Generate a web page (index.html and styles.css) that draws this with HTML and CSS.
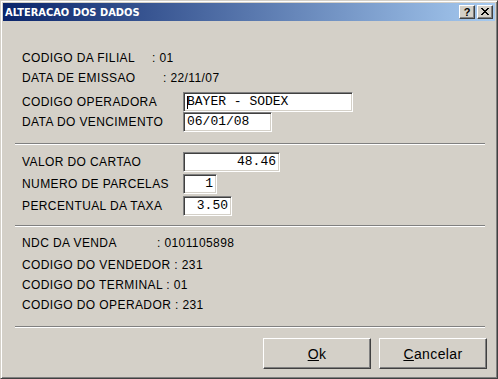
FILE: index.html
```html
<!DOCTYPE html>
<html lang="pt">

<head>
    <meta charset="UTF-8">
    <title>ALTERACAO DOS DADOS</title>
    <link rel="stylesheet" href="styles.css">
</head>

<body>

    <div class="window">
        <div class="titlebar">
            <span class="title">ALTERACAO DOS DADOS</span>
            <div class="ctrls">
                <span class="ctrl">?</span>
                <span class="ctrl close">
                    <svg width="8" height="7" viewBox="0 0 8 7">
                        <path d="M0 0h2v1h1v1h2v-1h1v-1h2v1h-1v1h-1v1h-1v1h1v1h1v1h1v1h-2v-1h-1v-1h-2v1h-1v1h-2v-1h1v-1h1v-1h1v-1h-1v-1h-1v-1h-1z" fill="#000"/>
                    </svg>
                </span>
            </div>
        </div>

        <div class="content">
            <div class="section first">
                <div class="row"><span class="lbl lbl-filial">CODIGO DA FILIAL</span><span>: 01</span></div>
                <div class="row"><span class="lbl lbl-emissao">DATA DE EMISSAO</span><span>: 22/11/07</span></div>
                <div class="row field gap-top">
                    <span class="lbl lbl-field">CODIGO OPERADORA</span>
                    <div class="edit w-oper"><span class="caret"></span>BAYER - SODEX</div>
                </div>
                <div class="row field">
                    <span class="lbl lbl-field">DATA DO VENCIMENTO</span>
                    <div class="edit w-date">06/01/08</div>
                </div>
            </div>

            <div class="sep"></div>

            <div class="section second">
                <div class="row field">
                    <span class="lbl lbl-field">VALOR DO CARTAO</span>
                    <div class="edit num w-valor">48.46</div>
                </div>
                <div class="row field">
                    <span class="lbl lbl-field">NUMERO DE PARCELAS</span>
                    <div class="edit num w-parc">1</div>
                </div>
                <div class="row field">
                    <span class="lbl lbl-field">PERCENTUAL DA TAXA</span>
                    <div class="edit num w-taxa">3.50</div>
                </div>
            </div>

            <div class="sep"></div>

            <div class="section third">
                <div class="row"><span class="lbl lbl-ndc">NDC DA VENDA</span><span>: 0101105898</span></div>
                <div class="row">CODIGO DO VENDEDOR : 231</div>
                <div class="row">CODIGO DO TERMINAL : 01</div>
                <div class="row">CODIGO DO OPERADOR : 231</div>
            </div>

            <div class="sep"></div>

            <div class="buttons">
                <button class="btn"><u>O</u>k</button>
                <button class="btn"><u>C</u>ancelar</button>
            </div>
        </div>
    </div>

</body>

</html>
```

FILE: styles.css
```css
html,
body {
    margin: 0;
    padding: 0;
}

body {
    width: 498px;
    height: 379px;
    background-color: #d4d0c8;
    font-family: "Liberation Sans", Arial, sans-serif;
    font-size: 12px;
    color: #000;
}

/* classic raised window frame */
.window {
    box-sizing: border-box;
    width: 498px;
    height: 379px;
    background-color: #d4d0c8;
    border-top: 1px solid #d4d0c8;
    border-left: 1px solid #d4d0c8;
    border-right: 1px solid #404040;
    border-bottom: 1px solid #404040;
    box-shadow: inset 1px 1px 0 #fff, inset -1px -1px 0 #808080;
    padding: 2px;
}

.titlebar {
    height: 18px;
    display: flex;
    align-items: center;
    justify-content: space-between;
    padding-left: 2px;
    padding-right: 2px;
    background: linear-gradient(to right, #0a246a, #a6caf0);
}

.title {
    color: #fff;
    font-weight: bold;
    font-size: 11px;
    font-family: "DejaVu Sans Condensed", "DejaVu Sans", sans-serif;
    font-stretch: condensed;
    letter-spacing: 0;
}

.ctrls {
    display: flex;
    gap: 2px;
}

.ctrl {
    box-sizing: border-box;
    width: 16px;
    height: 14px;
    display: flex;
    align-items: center;
    justify-content: center;
    background-color: #d4d0c8;
    border-top: 1px solid #fff;
    border-left: 1px solid #fff;
    border-right: 1px solid #404040;
    border-bottom: 1px solid #404040;
    box-shadow: inset -1px -1px 0 #808080;
    font-weight: bold;
    font-size: 11px;
    line-height: 12px;
    padding-bottom: 1px;
}

.content {
    padding: 0 8px 0 9px;
}

.section {
    padding-left: 10px;
}

.section.first {
    padding-top: 27px;
    padding-bottom: 11px;
}

.section.second {
    padding-top: 7px;
    padding-bottom: 9px;
    display: flex;
    flex-direction: column;
    gap: 2px;
}

.section.third {
    padding-top: 6px;
    padding-bottom: 11px;
}

.row {
    height: 20px;
    display: flex;
    align-items: center;
    white-space: nowrap;
    letter-spacing: 0.4px;
}

.section.third .row:first-child {
    margin-bottom: 2px;
}

.gap-top {
    margin-top: 4px;
}

.lbl {
    display: inline-block;
    flex-shrink: 0;
}

.lbl-filial {
    width: 130px;
}

.lbl-emissao {
    width: 141px;
}

.lbl-field {
    width: 161px;
}

.lbl-ndc {
    width: 135px;
}

/* sunken edit box */
.edit {
    box-sizing: border-box;
    height: 20px;
    background-color: #fff;
    border-top: 1px solid #808080;
    border-left: 1px solid #808080;
    border-right: 1px solid #fff;
    border-bottom: 1px solid #fff;
    box-shadow: inset 1px 1px 0 #404040, inset -1px -1px 0 #d4d0c8;
    font-family: "Liberation Mono", "Courier New", monospace;
    font-size: 13px;
    letter-spacing: 0;
    line-height: 18px;
    padding: 0 3px;
    display: flex;
    align-items: center;
    position: relative;
}

.edit.num {
    justify-content: flex-end;
}

.caret {
    position: absolute;
    left: 3px;
    top: 3px;
    width: 1px;
    height: 13px;
    background-color: #000;
}

.w-oper {
    width: 170px;
}

.w-date {
    width: 89px;
}

.w-valor {
    width: 97px;
}

.w-parc {
    width: 34px;
}

.w-taxa {
    width: 49px;
}

.sep {
    height: 0;
    border-top: 1px solid #808080;
    border-bottom: 1px solid #fff;
    margin: 0 2px 0 3px;
}

.buttons {
    display: flex;
    justify-content: flex-end;
    gap: 8px;
    padding-top: 10px;
}

.btn {
    box-sizing: border-box;
    width: 108px;
    height: 31px;
    background-color: #d4d0c8;
    border-top: 1px solid #fff;
    border-left: 1px solid #fff;
    border-right: 1px solid #404040;
    border-bottom: 1px solid #404040;
    box-shadow: inset -1px -1px 0 #808080;
    font-family: "Liberation Sans", Arial, sans-serif;
    font-size: 14px;
    letter-spacing: 0.4px;
    color: #000;
    padding: 0;
}
```
